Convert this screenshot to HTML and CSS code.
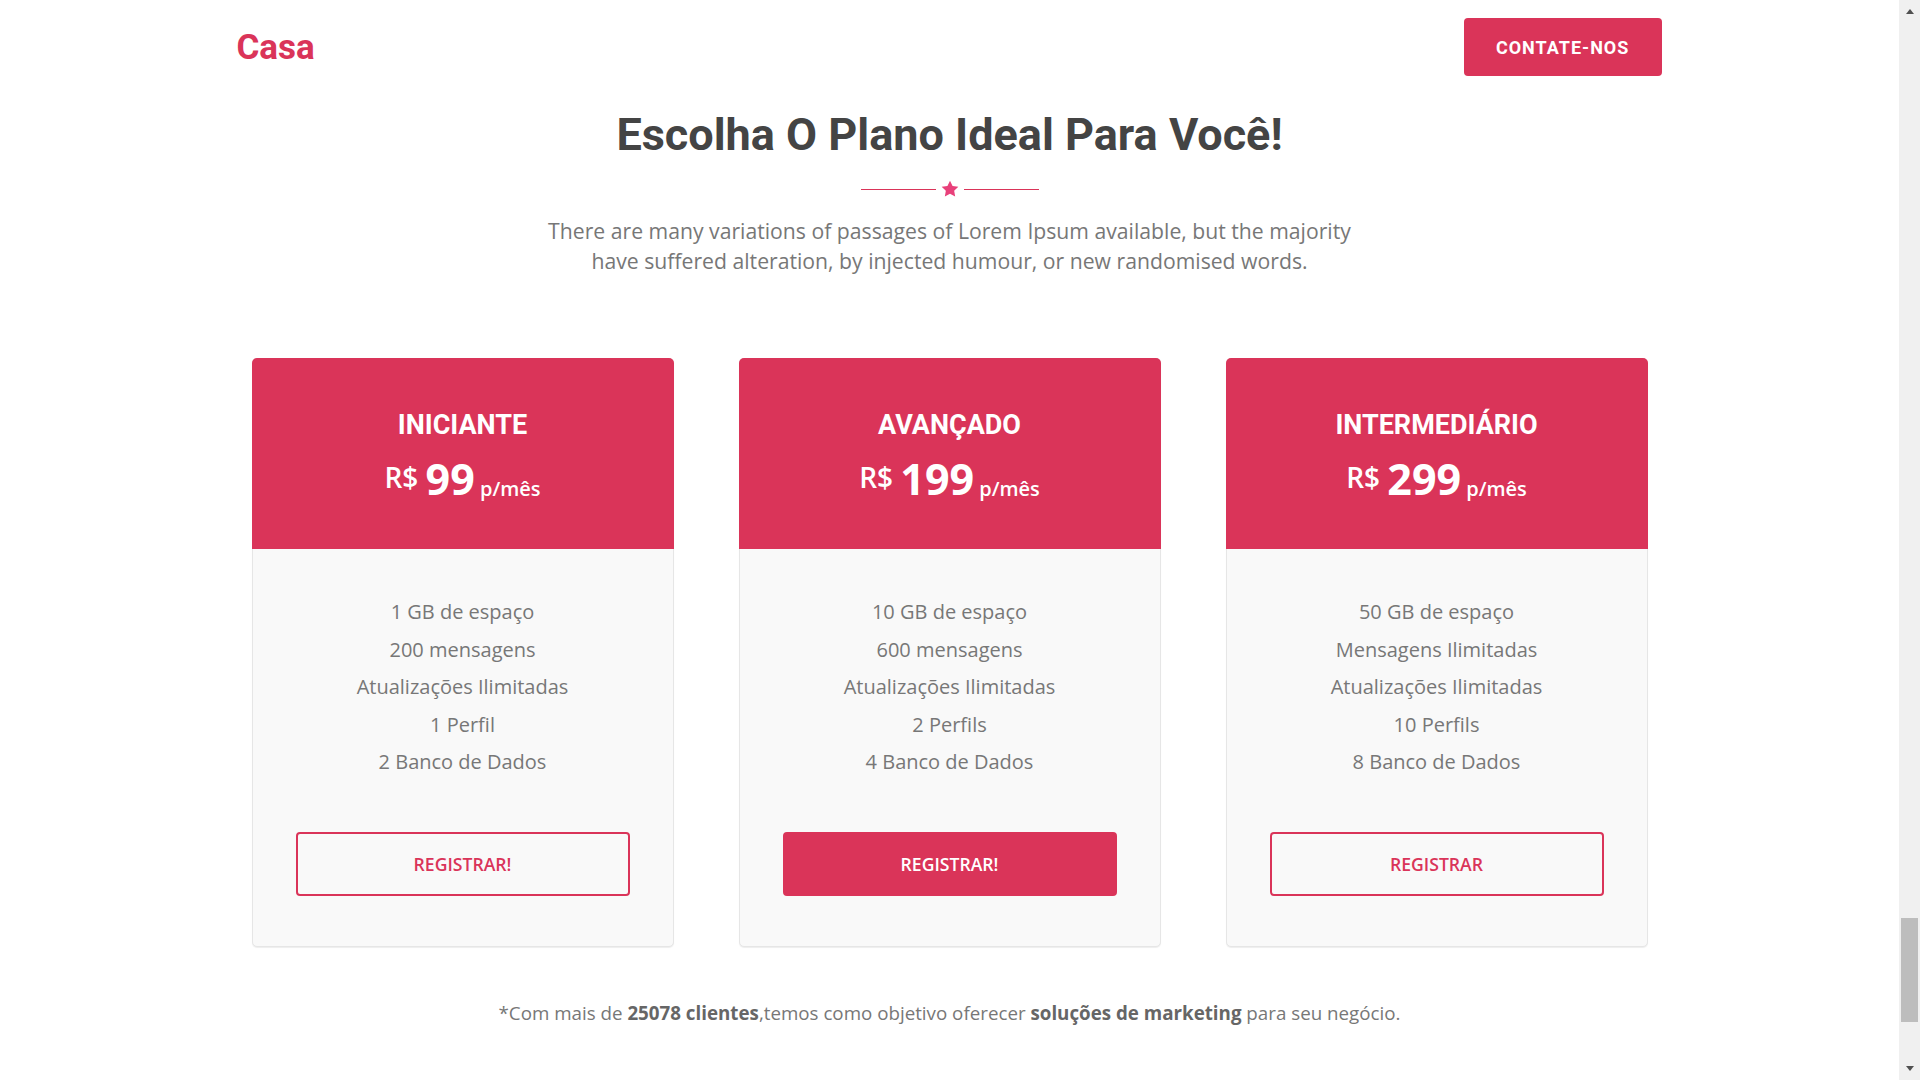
FILE: index.html
```html
<!DOCTYPE html>
<html lang="pt-BR">
<head>
<meta charset="utf-8">
<title>Planos</title>
<link rel="stylesheet" href="styles.css">
</head>
<body>
<div class="window">
  <main class="viewport">
    <header class="navbar">
      <div class="nav-inner">
        <a class="brand" href="#">Casa</a>
        <a class="btn-contact" href="#">CONTATE-NOS</a>
      </div>
    </header>

    <section class="pricing" id="planos">
      <h2 class="section-title">Escolha O Plano Ideal Para Você!</h2>
      <div class="divider">
        <span class="line"></span>
        <svg class="star" viewBox="0 0 24 24" width="20" height="20" aria-hidden="true"><path d="M12 2l3.09 6.26L22 9.27l-5 4.87 1.18 6.88L12 17.77l-6.18 3.25L7 14.140 2 9.27l6.91-1.01L12 2z"/></svg>
        <span class="line"></span>
      </div>
      <p class="lead">There are many variations of passages of Lorem Ipsum available, but the majority have suffered alteration, by injected humour, or new randomised words.</p>

      <div class="plans">
        <div class="plan">
          <div class="plan-head">
            <h3>INICIANTE</h3>
            <div class="price"><span class="cur">R$ </span><span class="amount">99</span><span class="per"> p/mês</span></div>
          </div>
          <div class="plan-body">
            <ul>
              <li>1 GB de espaço</li>
              <li>200 mensagens</li>
              <li>Atualizações Ilimitadas</li>
              <li>1 Perfil</li>
              <li>2 Banco de Dados</li>
            </ul>
            <a class="btn-plan" href="#">REGISTRAR!</a>
          </div>
        </div>

        <div class="plan">
          <div class="plan-head">
            <h3>AVANÇADO</h3>
            <div class="price"><span class="cur">R$ </span><span class="amount">199</span><span class="per"> p/mês</span></div>
          </div>
          <div class="plan-body">
            <ul>
              <li>10 GB de espaço</li>
              <li>600 mensagens</li>
              <li>Atualizações Ilimitadas</li>
              <li>2 Perfils</li>
              <li>4 Banco de Dados</li>
            </ul>
            <a class="btn-plan btn-plan-solid" href="#">REGISTRAR!</a>
          </div>
        </div>

        <div class="plan">
          <div class="plan-head">
            <h3>INTERMEDIÁRIO</h3>
            <div class="price"><span class="cur">R$ </span><span class="amount">299</span><span class="per"> p/mês</span></div>
          </div>
          <div class="plan-body">
            <ul>
              <li>50 GB de espaço</li>
              <li>Mensagens Ilimitadas</li>
              <li>Atualizações Ilimitadas</li>
              <li>10 Perfils</li>
              <li>8 Banco de Dados</li>
            </ul>
            <a class="btn-plan" href="#">REGISTRAR</a>
          </div>
        </div>
      </div>

      <p class="note">*Com mais de <strong>25078 clientes</strong>,temos como objetivo oferecer <strong>soluções de marketing</strong> para seu negócio.</p>
    </section>
  </main>

  <aside class="scrollbar" aria-hidden="true">
    <div class="sb-btn sb-up"><span class="arrow-up"></span></div>
    <div class="sb-track">
      <div class="sb-thumb" style="margin-top:897px;height:104px"></div>
    </div>
    <div class="sb-btn sb-down"><span class="arrow-down"></span></div>
  </aside>
</div>
</body>
</html>
```

FILE: styles.css
```css
html, body {
  margin: 0;
  height: 100%;
}

body {
  background: #fff;
  font-family: "Open Sans", "Liberation Sans", sans-serif;
  color: #777;
  overflow: hidden;
}

a {
  text-decoration: none;
}

.window {
  display: flex;
  height: 100vh;
}
.viewport {
  flex: 1;
  min-width: 0;
  overflow: hidden;
}

/* ---------- scrollbar (browser chrome in the capture) ---------- */
.scrollbar {
  width: 21px;
  flex: none;
  display: flex;
  flex-direction: column;
  background: #f0f0f0;
}
.sb-btn {
  height: 21px;
  flex: none;
  display: flex;
  justify-content: center;
  align-items: flex-start;
  box-sizing: border-box;
}
.sb-up {
  padding-top: 9px;
}
.sb-down {
  padding-top: 7px;
}
.arrow-up {
  width: 0;
  height: 0;
  border-left: 4.5px solid transparent;
  border-right: 4.5px solid transparent;
  border-bottom: 5px solid #505050;
}
.arrow-down {
  width: 0;
  height: 0;
  border-left: 4.5px solid transparent;
  border-right: 4.5px solid transparent;
  border-top: 5px solid #505050;
}
.sb-track {
  flex: 1;
  padding: 0 2px;
}
.sb-thumb {
  background: #bdbdbd;
}

/* ---------- navbar ---------- */
.navbar {
  background: #fff;
}
.nav-inner {
  width: 75%;
  margin: 0 auto;
  padding: 18px 0;
  display: flex;
  align-items: center;
  justify-content: space-between;
}
.brand {
  font-family: Roboto, "Liberation Sans", sans-serif;
  font-weight: 700;
  font-size: 35px;
  line-height: 1;
  color: #da3459;
  margin-left: -1px;
}
.btn-contact {
  width: 198px;
  height: 58px;
  box-sizing: border-box;
  display: flex;
  align-items: center;
  justify-content: center;
  background: #da3459;
  color: #fff;
  border-radius: 4px;
  font-family: Roboto, "Liberation Sans", sans-serif;
  font-weight: 700;
  font-size: 18px;
  letter-spacing: 1px;
}

/* ---------- pricing ---------- */
.pricing {
  padding: 13px 0 56px;
  text-align: center;
}
.section-title {
  margin: 0;
  font-family: Roboto, "Liberation Sans", sans-serif;
  font-weight: 700;
  font-size: 45px;
  line-height: 56px;
  color: #444;
}
.divider {
  margin-top: 16px;
  height: 20px;
  display: flex;
  align-items: center;
  justify-content: center;
  gap: 4px;
}
.divider .line {
  width: 75px;
  height: 1px;
  background: #da3459;
}
.divider .star {
  display: block;
  fill: #e8407a;
}
.lead {
  max-width: 840px;
  margin: 17px auto 0;
  font-size: 21.2px;
  line-height: 30px;
  color: #777;
}

.plans {
  margin-top: 82px;
  display: flex;
  justify-content: center;
  gap: 65px;
}
.plan {
  width: 422px;
  box-sizing: border-box;
  background: #f9f9f9;
  border: 1px solid #e6e6e6;
  border-radius: 5px;
  box-shadow: 0 1px 1px rgba(0, 0, 0, 0.07);
}
.plan-head {
  margin: -1px -1px 0;
  height: 191px;
  box-sizing: border-box;
  padding-top: 51px;
  background: #da3459;
  border-radius: 5px 5px 0 0;
  color: #fff;
}
.plan-head h3 {
  margin: 0;
  font-family: Roboto, "Liberation Sans", sans-serif;
  font-weight: 700;
  font-size: 27px;
  line-height: 32px;
}
.price {
  margin-top: 13px;
  height: 50px;
  font-weight: 700;
  font-size: 43px;
  line-height: 50px;
}
.price .cur {
  font-size: 28px;
  font-weight: 600;
  line-height: 1;
  vertical-align: 7px;
}
.price .per {
  font-size: 20px;
  font-weight: 600;
  line-height: 1;
  vertical-align: -1px;
}
.plan-body {
  padding: 44px 43px 50px;
}
.plan-body ul {
  list-style: none;
  margin: 0;
  padding: 0;
}
.plan-body li {
  font-size: 20px;
  line-height: 37.5px;
  color: #777;
}
.btn-plan {
  display: block;
  margin-top: 51px;
  height: 64px;
  box-sizing: border-box;
  border: 2px solid #da3459;
  border-radius: 4px;
  line-height: 60px;
  font-size: 17.6px;
  font-weight: 600;
  color: #da3459;
}
.btn-plan-solid {
  background: #da3459;
  color: #fff;
}

.note {
  margin: 52px 0 0;
  font-size: 18.75px;
  line-height: 27px;
  color: #777;
}
.note strong {
  font-weight: 700;
  color: #666;
}
```
